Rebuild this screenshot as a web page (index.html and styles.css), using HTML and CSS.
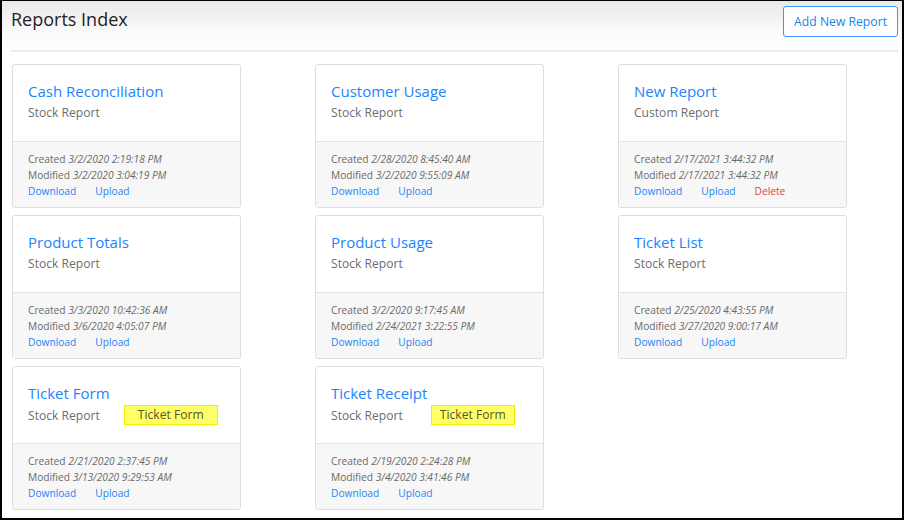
FILE: index.html
```html
<!DOCTYPE html>
<html>
<head>
<meta charset="utf-8">
<link rel="stylesheet" href="styles.css">
</head>
<body>
<div class="frame">
  <header class="page-head">
    <h1 class="page-title">Reports Index</h1>
    <button class="btn-add">Add New Report</button>
  </header>
  <div class="rule"></div>
  <div class="grid">
    <div class="card">
      <div class="card-body">
        <div class="card-title">Cash Reconciliation</div>
        <div class="card-sub">Stock Report</div>
      </div>
      <div class="card-foot">
        <div>Created <em>3/2/2020 2:19:18 PM</em></div>
        <div>Modified <em>3/2/2020 3:04:19 PM</em></div>
        <div class="links"><a>Download</a><a>Upload</a></div>
      </div>
    </div>
    <div class="card">
      <div class="card-body">
        <div class="card-title">Customer Usage</div>
        <div class="card-sub">Stock Report</div>
      </div>
      <div class="card-foot">
        <div>Created <em>2/28/2020 8:45:40 AM</em></div>
        <div>Modified <em>3/2/2020 9:55:09 AM</em></div>
        <div class="links"><a>Download</a><a>Upload</a></div>
      </div>
    </div>
    <div class="card">
      <div class="card-body">
        <div class="card-title">New Report</div>
        <div class="card-sub">Custom Report</div>
      </div>
      <div class="card-foot">
        <div>Created <em>2/17/2021 3:44:32 PM</em></div>
        <div>Modified <em>2/17/2021 3:44:32 PM</em></div>
        <div class="links"><a>Download</a><a>Upload</a><a class="danger">Delete</a></div>
      </div>
    </div>
    <div class="card">
      <div class="card-body">
        <div class="card-title">Product Totals</div>
        <div class="card-sub">Stock Report</div>
      </div>
      <div class="card-foot">
        <div>Created <em>3/3/2020 10:42:36 AM</em></div>
        <div>Modified <em>3/6/2020 4:05:07 PM</em></div>
        <div class="links"><a>Download</a><a>Upload</a></div>
      </div>
    </div>
    <div class="card">
      <div class="card-body">
        <div class="card-title">Product Usage</div>
        <div class="card-sub">Stock Report</div>
      </div>
      <div class="card-foot">
        <div>Created <em>3/2/2020 9:17:45 AM</em></div>
        <div>Modified <em>2/24/2021 3:22:55 PM</em></div>
        <div class="links"><a>Download</a><a>Upload</a></div>
      </div>
    </div>
    <div class="card">
      <div class="card-body">
        <div class="card-title">Ticket List</div>
        <div class="card-sub">Stock Report</div>
      </div>
      <div class="card-foot">
        <div>Created <em>2/25/2020 4:43:55 PM</em></div>
        <div>Modified <em>3/27/2020 9:00:17 AM</em></div>
        <div class="links"><a>Download</a><a>Upload</a></div>
      </div>
    </div>
    <div class="card">
      <div class="card-body">
        <div class="card-title">Ticket Form</div>
        <div class="card-sub">Stock Report<span class="tag tag-wide">Ticket Form</span></div>
      </div>
      <div class="card-foot">
        <div>Created <em>2/21/2020 2:37:45 PM</em></div>
        <div>Modified <em>3/13/2020 9:29:53 AM</em></div>
        <div class="links"><a>Download</a><a>Upload</a></div>
      </div>
    </div>
    <div class="card">
      <div class="card-body">
        <div class="card-title">Ticket Receipt</div>
        <div class="card-sub">Stock Report<span class="tag tag-narrow">Ticket Form</span></div>
      </div>
      <div class="card-foot">
        <div>Created <em>2/19/2020 2:24:28 PM</em></div>
        <div>Modified <em>3/4/2020 3:41:46 PM</em></div>
        <div class="links"><a>Download</a><a>Upload</a></div>
      </div>
    </div>
  </div>
</div>
</body>
</html>
```
FILE: styles.css
```css
html, body {
  margin: 0;
  padding: 0;
  background: #fff;
}
body {
  font-family: "Open Sans", "Noto Sans", sans-serif;
  color: #444;
}
.frame {
  box-sizing: border-box;
  width: 904px;
  height: 520px;
  border: 2px solid #000;
  border-top-width: 1px;
  overflow: hidden;
  background: #fff;
}
.page-head {
  box-sizing: border-box;
  display: flex;
  justify-content: space-between;
  align-items: flex-start;
  height: 49px;
  padding: 5px 4px 0 9px;
  background: linear-gradient(#e9e9e9 0px, #fbfbfb 32px, #fff 46px);
}
.page-title {
  margin: 0;
  font-weight: 400;
  font-size: 18px;
  line-height: 27px;
  color: #222;
}
.btn-add {
  font-family: inherit;
  height: 31px;
  padding: 0 10px;
  background: #fff;
  border: 1px solid #3d95f7;
  border-radius: 3px;
  color: #1a7ff0;
  font-size: 12.2px;
  box-sizing: border-box;
}
.rule {
  margin: 0 4px 0 9px;
  height: 2px;
  background: #ececec;
}
.grid {
  display: grid;
  grid-template-columns: repeat(3, 229px);
  column-gap: 74px;
  row-gap: 7px;
  padding: 12px 0 0 10px;
}
.card {
  height: 144px;
  box-sizing: border-box;
  border: 1px solid #dedede;
  border-radius: 3px;
  display: flex;
  flex-direction: column;
  overflow: hidden;
}
.card-body {
  height: 76px;
  box-sizing: border-box;
  padding: 15px 15px 0;
}
.card-title {
  font-size: 15px;
  line-height: 23px;
  color: #1a84ff;
}
.card-sub {
  font-size: 12.1px;
  line-height: 19px;
  color: #6d6d6d;
  display: flex;
  align-items: center;
}
.tag {
  display: inline-block;
  box-sizing: border-box;
  height: 20px;
  line-height: 18px;
  text-align: center;
  background: #ffff66;
  border: 1px solid #f0f000;
  color: #55552e;
}
.tag-wide {
  width: 94px;
  margin-left: 24px;
}
.tag-narrow {
  width: 84px;
  margin-left: 28px;
}
.card-foot {
  flex: 1;
  background: #f7f7f7;
  border-top: 1px solid #e3e3e3;
  padding: 9px 15px 0;
  font-size: 10.2px;
  line-height: 16px;
  color: #6a6a6a;
}
.card-foot em {
  font-style: italic;
}
.links {
  display: flex;
  gap: 19px;
}
.links a {
  color: #2585f5;
}
.links a.danger {
  color: #e0404f;
}
```
